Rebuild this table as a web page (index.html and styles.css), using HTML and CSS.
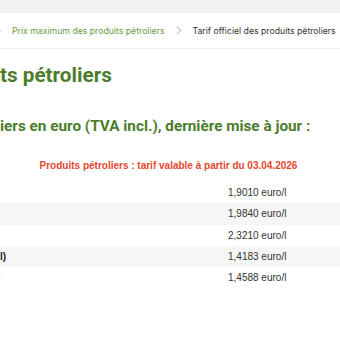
FILE: index.html
```html
<!DOCTYPE html>
<html lang="fr">
<head>
<meta charset="utf-8">
<link rel="stylesheet" href="styles.css">
</head>
<body>
<div class="topband"></div>
<nav class="crumbs">
  <span class="sep sep-first">›</span>
  <a class="crumb-link">Prix maximum des produits pétroliers</a>
  <svg class="chev" width="6" height="9" viewBox="0 0 6 9"><path d="M1 1 L5 4.5 L1 8" fill="none" stroke="#c8c8c8" stroke-width="1.3"/></svg>
  <span class="crumb-current">Tarif officiel des produits pétroliers</span>
</nav>
<main class="content">
  <h1 class="title">ts pétroliers</h1>
  <h2 class="subtitle">iers en euro (TVA incl.), dernière mise à jour :</h2>
  <div class="tarif">
    <div class="tarif-head">Produits pétroliers : tarif valable à partir du 03.04.2026</div>
    <div class="row"><span class="label"></span><span class="value">1,9010 euro/l</span></div>
    <div class="row striped"><span class="label"></span><span class="value">1,9840 euro/l</span></div>
    <div class="row"><span class="label"></span><span class="value">2,3210 euro/l</span></div>
    <div class="row striped"><span class="label bold">l)</span><span class="value">1,4183 euro/l</span></div>
    <div class="row"><span class="label faint">·</span><span class="value">1,4588 euro/l</span></div>
  </div>
</main>
</body>
</html>
```
FILE: styles.css
```css
html, body {
  margin: 0;
  padding: 0;
  background: #ffffff;
  overflow: hidden;
}
.topband {
  height: 13px;
  background: #f1f1f2;
}
.crumbs {
  display: flex;
  align-items: center;
  height: 35px;
  border-bottom: 1px solid #ececec;
  font-family: Inter, "Noto Sans", sans-serif;
  font-size: 8.7px;
  white-space: nowrap;
}
.crumbs > * {
  flex-shrink: 0;
}
.sep-first {
  color: #bbbbbb;
  margin-left: -2px;
  width: 14px;
}
.crumb-link {
  color: #6a9a45;
}
.chev {
  margin: 0 11px 0 11px;
}
.crumb-current {
  color: #333333;
}
.content {
  white-space: nowrap;
}
.title {
  margin: 0;
  padding-top: 14px;
  font-family: Roboto, sans-serif;
  font-weight: 700;
  font-size: 20.7px;
  line-height: 24px;
  color: #4b7d2c;
}
.subtitle {
  margin: 0;
  padding-top: 29px;
  font-family: Roboto, sans-serif;
  font-weight: 700;
  font-size: 15.3px;
  line-height: 20px;
  color: #4b7d2c;
}
.tarif {
  margin-top: 20px;
  font-family: "Liberation Sans", Arial, sans-serif;
  font-size: 10px;
}
.tarif-head {
  text-align: center;
  width: 337px;
  font-weight: 700;
  font-size: 10px;
  color: #e5472f;
  line-height: 20px;
  margin-bottom: 6px;
}
.row {
  display: grid;
  grid-template-columns: 228px 1fr;
  height: 21.3px;
  align-items: center;
  color: #333333;
}
.striped {
  background: #f6f6f6;
}
.bold {
  font-weight: 700;
  color: #222222;
}
.faint {
  color: #cccccc;
}
```
